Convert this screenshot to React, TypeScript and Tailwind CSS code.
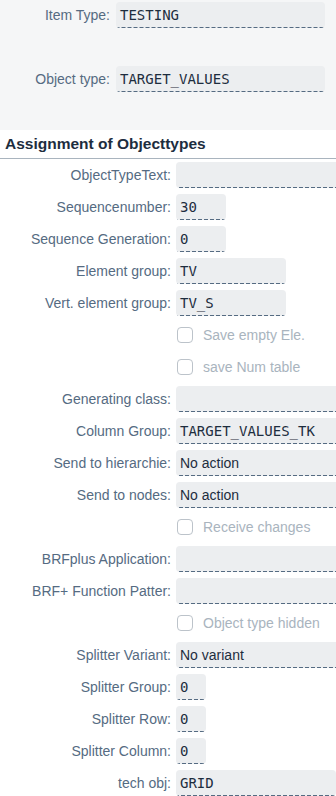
import React from "react";

type Row =
  | { kind: "field"; label: string; value?: string; width: string; mono?: boolean }
  | { kind: "check"; label: string };

const rows: Row[] = [
  { kind: "field", label: "ObjectTypeText", width: "w-[180px]" },
  { kind: "field", label: "Sequencenumber", value: "30", width: "w-[50px]", mono: true },
  { kind: "field", label: "Sequence Generation", value: "0", width: "w-[50px]", mono: true },
  { kind: "field", label: "Element group", value: "TV", width: "w-[110px]", mono: true },
  { kind: "field", label: "Vert. element group", value: "TV_S", width: "w-[110px]", mono: true },
  { kind: "check", label: "Save empty Ele." },
  { kind: "check", label: "save Num table" },
  { kind: "field", label: "Generating class", width: "w-[180px]" },
  { kind: "field", label: "Column Group", value: "TARGET_VALUES_TK", width: "w-[180px]", mono: true },
  { kind: "field", label: "Send to hierarchie", value: "No action", width: "w-[180px]" },
  { kind: "field", label: "Send to nodes", value: "No action", width: "w-[180px]" },
  { kind: "check", label: "Receive changes" },
  { kind: "field", label: "BRFplus Application", width: "w-[180px]" },
  { kind: "field", label: "BRF+ Function Patter", width: "w-[180px]" },
  { kind: "check", label: "Object type hidden" },
  { kind: "field", label: "Splitter Variant", value: "No variant", width: "w-[180px]" },
  { kind: "field", label: "Splitter Group", value: "0", width: "w-[30px]", mono: true },
  { kind: "field", label: "Splitter Row", value: "0", width: "w-[30px]", mono: true },
  { kind: "field", label: "Splitter Column", value: "0", width: "w-[30px]", mono: true },
  { kind: "field", label: "tech obj", value: "GRID", width: "w-[160px]", mono: true },
];

// read-only field: grey box with dashed underline
const Field = ({ value, width, mono }: { value?: string; width: string; mono?: boolean }) => (
  <div
    className={`${width} shrink-0 h-[26px] flex items-center px-[4px] rounded-[4px] bg-[#eceef0] bg-[linear-gradient(to_right,#556b82_65%,transparent_65%)] bg-[length:6px_1px] bg-repeat-x bg-bottom text-[14px] text-[#1d2d3e] whitespace-nowrap overflow-hidden ${
      mono ? "font-['DejaVu_Sans_Mono',monospace] text-[13.5px]" : ""
    }`}
  >
    {value}
  </div>
);

export default function App() {
  return (
    <div className="w-[336px] h-[796px] overflow-hidden bg-white font-['Liberation_Sans',Arial,sans-serif]">
      {/* header block */}
      <div className="bg-[#f5f6f7] h-[130px] pt-[2px] pr-[11px] flex flex-col gap-[38px]">
        <div className="flex items-center">
          <div className="w-[111px] text-right text-[14px] text-[#556b82] pr-[1px]">Item Type:</div>
          <div className="flex-1 ml-[5px]">
            <Field value="TESTING" width="w-full" mono />
          </div>
        </div>
        <div className="flex items-center">
          <div className="w-[111px] text-right text-[14px] text-[#556b82] pr-[1px]">Object type:</div>
          <div className="flex-1 ml-[5px]">
            <Field value="TARGET_VALUES" width="w-full" mono />
          </div>
        </div>
      </div>

      {/* section title */}
      <div className="h-[29px] flex items-center px-[5px] border-b border-[#a9b4be]">
        <span className="text-[15.5px] font-bold text-[#1d2d3e]">Assignment of Objecttypes</span>
      </div>

      <div className="pt-[3px] flex flex-col gap-[6px]">
        {rows.map((r) => (
          <div key={r.label} className="h-[26px] flex items-center">
            <div className="w-[172px] shrink-0 text-right text-[14px] text-[#556b82] pr-[1px] whitespace-nowrap">
              {r.kind === "field" ? `${r.label}:` : ""}
            </div>
            <div className="ml-[4px] flex items-center">
              {r.kind === "field" ? (
                <Field value={r.value} width={r.width} mono={r.mono} />
              ) : (
                <div className="flex items-center">
                  <span className="ml-[1px] w-[16px] h-[16px] rounded-[4px] border border-[#bcc3ca] bg-white" />
                  <span className="ml-[10px] text-[14px] text-[#a9b4be] whitespace-nowrap">{r.label}</span>
                </div>
              )}
            </div>
          </div>
        ))}
      </div>
    </div>
  );
}
